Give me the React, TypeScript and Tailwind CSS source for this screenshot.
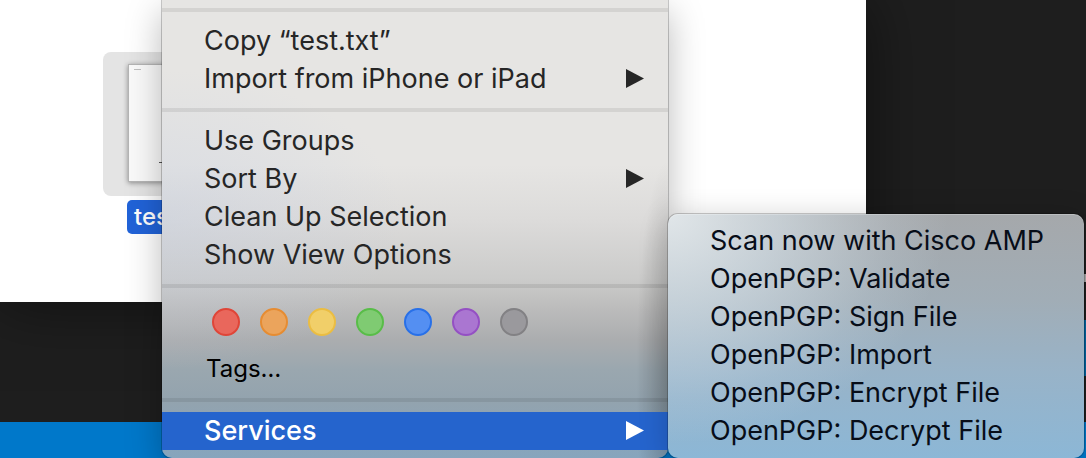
const tagColors = [
  { name: "Red", style: "bg-[#e9675c] border-[#df4538]" },
  { name: "Orange", style: "bg-[#eba45c] border-[#e68c32]" },
  { name: "Yellow", style: "bg-[#f1cf69] border-[#ebbd42]" },
  { name: "Green", style: "bg-[#7fcb72] border-[#58bd48]" },
  { name: "Blue", style: "bg-[#548ff2] border-[#2870e8]" },
  { name: "Purple", style: "bg-[#aa76d1] border-[#9450c3]" },
  { name: "Gray", style: "bg-[#9a999d] border-[#828184]" },
];

const services = [
  "Scan now with Cisco AMP",
  "OpenPGP: Validate",
  "OpenPGP: Sign File",
  "OpenPGP: Import",
  "OpenPGP: Encrypt File",
  "OpenPGP: Decrypt File",
];

function Arrow() {
  return (
    <svg className="h-5 w-[18px]" viewBox="0 0 18 20" fill="currentColor" aria-hidden="true">
      <path d="M0 0L18 9.5L0 19Z" />
    </svg>
  );
}

function MenuItem({
  label,
  submenu = false,
  selected = false,
}: {
  label: string;
  submenu?: boolean;
  selected?: boolean;
}) {
  return (
    <button
      type="button"
      role="menuitem"
      aria-haspopup={submenu ? "menu" : undefined}
      className={
        "flex h-[38px] w-full items-center justify-between pl-[42px] pr-6 text-left whitespace-nowrap " +
        (selected ? "bg-[#2564cd] font-medium text-white" : "")
      }
    >
      <span>{label}</span>
      {submenu && <Arrow />}
    </button>
  );
}

function Separator() {
  return <div role="separator" className="my-[10px] h-1 bg-black/8" />;
}

function Backdrop() {
  return (
    <div className="absolute inset-0 flex flex-col overflow-hidden bg-[#1e1e1e]">
      <div className="flex h-[302px]">
        <section className="w-[866px] shrink-0 bg-white pl-[103px] pt-[52px] shadow-[0_0_60px_rgba(0,0,0,0.5)]">
          <div className="flex w-36 flex-col items-center gap-1">
            <div className="flex h-36 w-full justify-center rounded-lg bg-[#e4e4e4] pt-3">
              <div className="flex h-[118px] w-[94px] flex-col justify-between border border-[#b4b4b4] bg-[#fafafa] pt-1 pb-[18px] shadow-[0_1px_5px_rgba(0,0,0,0.4)]">
                <div className="ml-[5px] h-px w-[7px] bg-[#c0c0c0]" />
                <div className="mx-auto h-px w-8 bg-[#555555]" />
              </div>
            </div>
            <span className="w-24 rounded-[5px] bg-[#2163d8] px-[7px] text-2xl leading-[34px] font-medium text-white">
              tes
            </span>
          </div>
        </section>
      </div>
      <div className="grow" />
      <div className="h-9 bg-[#0078ca]" />
      <div className="absolute right-0 top-[274px] h-2 w-[2px] bg-[#aaaaaa]" />
      <div className="absolute right-0 top-80 h-14 w-[2px] bg-[#03639f]" />
    </div>
  );
}

export default function App() {
  return (
    <main className="relative min-h-screen overflow-hidden font-['Inter','Liberation_Sans',sans-serif] text-[27px] leading-[38px]">
      <Backdrop />
      <div className="relative flex items-end pl-[162px]">
        <div
          role="menu"
          aria-label="File"
          className="w-[506px] shrink-0 rounded-b-[10px] bg-[radial-gradient(ellipse_240px_150px_at_0px_220px,rgba(195,205,225,0.4),transparent),radial-gradient(ellipse_32px_220px_at_506px_380px,rgba(0,0,0,0.18),transparent),linear-gradient(to_bottom,#e6e5e3_0,#e6e5e3_165px,#dcdbda_220px,#cbcbca_280px,#bbbbbb_310px,#abadaf_340px,#9aa7af_370px,#93a3ae_400px,#87a5bd_458px)] pb-2 text-[#262626] shadow-[0_0_0_1px_rgba(0,0,0,0.2),0_12px_36px_rgba(0,0,0,0.28)]"
        >
          <div className="pt-2">
            <div role="separator" className="mb-[10px] h-1 bg-black/8" />
          </div>
          <MenuItem label="Copy “test.txt”" />
          <MenuItem label="Import from iPhone or iPad" submenu />
          <Separator />
          <MenuItem label="Use Groups" />
          <MenuItem label="Sort By" submenu />
          <MenuItem label="Clean Up Selection" />
          <MenuItem label="Show View Options" />
          <Separator />
          <div className="flex gap-5 pt-[10px] pb-[14px] pl-[50px]">
            {tagColors.map((tag) => (
              <button
                key={tag.name}
                type="button"
                aria-label={tag.name}
                className={"size-7 rounded-full border-2 " + tag.style}
              />
            ))}
          </div>
          <button
            type="button"
            role="menuitem"
            className="block h-[38px] w-full pl-11 text-left text-2xl leading-[38px] text-black"
          >
            Tags…
          </button>
          <Separator />
          <MenuItem label="Services" submenu selected />
        </div>
        <div
          role="menu"
          aria-label="Services"
          className="mr-[2px] grow rounded-[10px] bg-[radial-gradient(ellipse_280px_230px_at_0px_0px,rgba(235,241,244,0.85),rgba(225,236,243,0.55)_40%,rgba(215,230,240,0.15)_80%,transparent),linear-gradient(to_bottom,#a5a8ab,#a1adb6_35%,#98b3c8_65%,#8cb7d6)] py-2 text-[#070d18] shadow-[inset_0_1px_0_rgba(255,255,255,0.25),0_0_0_1px_rgba(0,0,0,0.2),0_4px_30px_rgba(0,0,0,0.2)]"
        >
          {services.map((label) => (
            <MenuItem key={label} label={label} />
          ))}
        </div>
      </div>
    </main>
  );
}
